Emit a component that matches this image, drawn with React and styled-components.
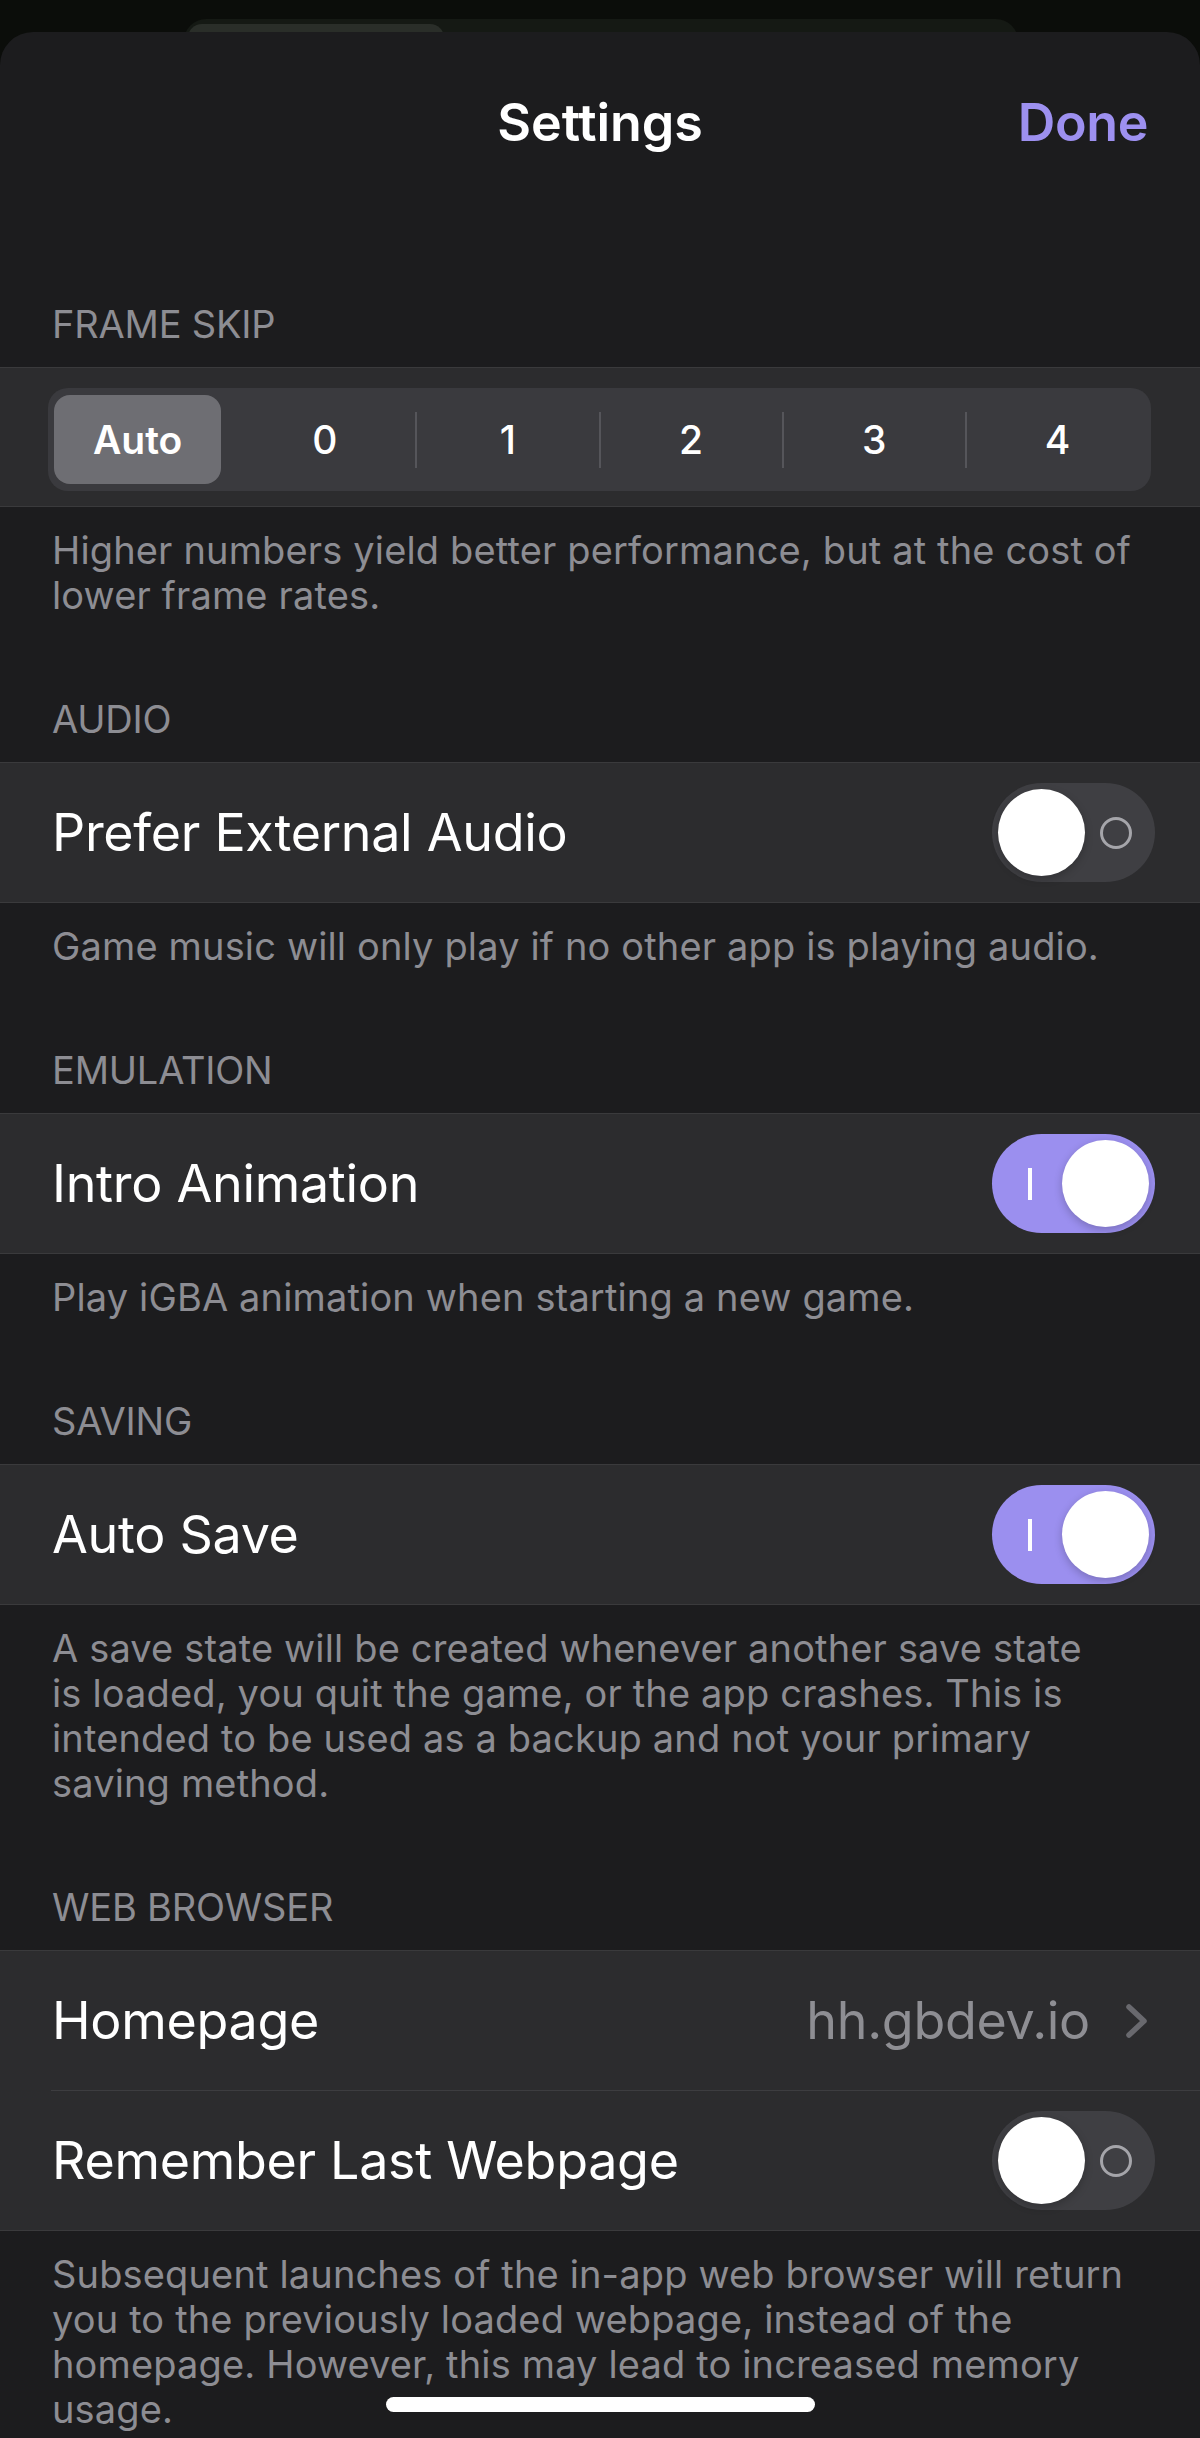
import styled, { createGlobalStyle } from 'styled-components';

const GlobalStyle = createGlobalStyle`
  html, body {
    margin: 0;
    padding: 0;
    background: #0b0d0a;
  }
  body {
    font-family: Inter, "Noto Sans", sans-serif;
    -webkit-font-smoothing: antialiased;
  }
`;

const Backdrop = styled.div`
  height: 32px;
  padding-top: 19px;
  box-sizing: border-box;
  overflow: hidden;
`;

const BehindCard = styled.div`
  margin-left: 184px;
  width: 834px;
  height: 40px;
  padding: 5px 4px;
  box-sizing: border-box;
  background: #151914;
  border-radius: 22px 22px 0 0;
`;

const BehindTab = styled.div`
  width: 256px;
  height: 30px;
  background: #2a2e29;
  border-radius: 14px;
`;

const Sheet = styled.div`
  min-height: calc(100vh - 32px);
  background: #1c1c1e;
  border-radius: 33px 33px 0 0;
  padding-bottom: 10px;
  box-sizing: border-box;
`;

const NavBar = styled.div`
  height: 180px;
  display: grid;
  grid-template-columns: 1fr auto 1fr;
  align-items: center;
  padding: 0 52px;
`;

const NavTitle = styled.div`
  grid-column: 2;
  color: #fff;
  font-size: 52px;
  font-weight: 600;
  letter-spacing: -0.1px;
`;

const DoneButton = styled.div`
  justify-self: end;
  color: #9d90f0;
  font-size: 52px;
  font-weight: 600;
  letter-spacing: -0.4px;
`;

const SectionList = styled.div`
  display: flex;
  flex-direction: column;
  gap: 79px;
  padding-top: 90px;
`;

const Section = styled.section`
  display: flex;
  flex-direction: column;
`;

const SectionHeader = styled.div`
  margin: 0 52px 20px;
  color: #8d8d93;
  font-size: 38px;
  line-height: 45px;
  text-transform: uppercase;
  letter-spacing: -0.2px;
`;

const SectionFooter = styled.div`
  margin: 21px 52px 0;
  color: #8d8d93;
  font-size: 38px;
  line-height: 45px;
  letter-spacing: 0.15px;
`;

const Group = styled.div`
  background: #2c2c2e;
  border-top: 1px solid #3a3a3c;
  border-bottom: 1px solid #3a3a3c;
`;

const Row = styled.div`
  height: 139px;
  display: flex;
  align-items: center;
  justify-content: space-between;
  padding: 0 45px 0 52px;
`;

const RowSeparator = styled.div`
  height: 1px;
  margin-left: 51px;
  background: #3d3d40;
`;

const Label = styled.span`
  color: #fff;
  font-size: 52px;
  letter-spacing: -0.3px;
`;

const Trailing = styled.div`
  display: flex;
  align-items: center;
  gap: 35px;
  margin-right: 7px;
`;

const Detail = styled.span`
  color: #8e8e93;
  font-size: 52px;
  letter-spacing: -0.3px;
`;

const Segmented = styled.div`
  height: 103px;
  margin: 20px 49px 15px 48px;
  padding: 2px;
  box-sizing: border-box;
  display: flex;
  align-items: center;
  background: #3a3a3e;
  border-radius: 20px;
`;

const Segment = styled.div`
  flex: 1;
  height: 100%;
  display: flex;
`;

const SegmentLabel = styled.div`
  flex: 1;
  display: flex;
  align-items: center;
  justify-content: center;
  color: #fff;
  font-size: 39px;
  font-weight: ${p => (p.$selected ? 600 : 500)};
  margin: ${p => (p.$selected ? '5px 12px 5px 4px' : '0')};
  background: ${p => (p.$selected ? '#6e6e73' : 'transparent')};
  border-radius: 16px;
`;

const SegmentDivider = styled.div`
  width: 2px;
  height: 56px;
  margin: 0 -1px;
  background: ${p => (p.$hidden ? 'transparent' : '#55555a')};
`;

const Switch = styled.div`
  width: 163px;
  height: 99px;
  padding: 6px;
  box-sizing: border-box;
  display: flex;
  align-items: center;
  justify-content: space-between;
  flex-direction: ${p => (p.$on ? 'row-reverse' : 'row')};
  background: ${p => (p.$on ? '#9b8fef' : '#3f3f43')};
  border-radius: 50px;
`;

const Thumb = styled.div`
  width: 87px;
  height: 87px;
  border-radius: 50%;
  background: #fff;
  box-shadow: 0 3px 8px rgba(0, 0, 0, 0.22);
`;

const OnMark = styled.div`
  width: 4px;
  height: 32px;
  margin-left: 30px;
  background: #fff;
`;

const OffMark = styled.div`
  width: 32px;
  height: 32px;
  margin-right: 17px;
  box-sizing: border-box;
  border: 3.5px solid #a5a5aa;
  border-radius: 50%;
`;

const HomeIndicator = styled.div`
  position: fixed;
  left: 50%;
  bottom: 26px;
  width: 429px;
  height: 15px;
  margin-left: -214px;
  border-radius: 8px;
  background: #fff;
`;

const frameOptions = ['Auto', '0', '1', '2', '3', '4'];

const Toggle = ({ on }) => (
  <Switch $on={on}>
    <Thumb />
    {on ? <OnMark /> : <OffMark />}
  </Switch>
);

const Chevron = () => (
  <svg width="23" height="36" viewBox="0 0 23 36">
    <polyline
      points="4,4 19,18 4,32"
      fill="none"
      stroke="#69696e"
      strokeWidth="5.5"
      strokeLinecap="round"
      strokeLinejoin="round"
    />
  </svg>
);

const FrameSkipControl = ({ selected }) => (
  <Segmented>
    {frameOptions.map((opt, i) => [
      i > 0 && (
        <SegmentDivider key={`d${i}`} $hidden={i === selected || i - 1 === selected} />
      ),
      <Segment key={opt}>
        <SegmentLabel $selected={i === selected}>{opt}</SegmentLabel>
      </Segment>,
    ])}
  </Segmented>
);

const App = () => {
  return (
    <>
      <GlobalStyle />
      <Backdrop>
        <BehindCard>
          <BehindTab />
        </BehindCard>
      </Backdrop>
      <Sheet>
        <NavBar>
          <NavTitle>Settings</NavTitle>
          <DoneButton>Done</DoneButton>
        </NavBar>

        <SectionList>
          <Section>
            <SectionHeader>Frame Skip</SectionHeader>
            <Group>
              <FrameSkipControl selected={0} />
            </Group>
            <SectionFooter>
              Higher numbers yield better performance, but at the cost of<br />
              lower frame rates.
            </SectionFooter>
          </Section>

          <Section>
            <SectionHeader>Audio</SectionHeader>
            <Group>
              <Row>
                <Label>Prefer External Audio</Label>
                <Toggle on={false} />
              </Row>
            </Group>
            <SectionFooter>
              Game music will only play if no other app is playing audio.
            </SectionFooter>
          </Section>

          <Section>
            <SectionHeader>Emulation</SectionHeader>
            <Group>
              <Row>
                <Label>Intro Animation</Label>
                <Toggle on />
              </Row>
            </Group>
            <SectionFooter>Play iGBA animation when starting a new game.</SectionFooter>
          </Section>

          <Section>
            <SectionHeader>Saving</SectionHeader>
            <Group>
              <Row>
                <Label>Auto Save</Label>
                <Toggle on />
              </Row>
            </Group>
            <SectionFooter>
              A save state will be created whenever another save state<br />
              is loaded, you quit the game, or the app crashes. This is<br />
              intended to be used as a backup and not your primary<br />
              saving method.
            </SectionFooter>
          </Section>

          <Section>
            <SectionHeader>Web Browser</SectionHeader>
            <Group>
              <Row>
                <Label>Homepage</Label>
                <Trailing>
                  <Detail>hh.gbdev.io</Detail>
                  <Chevron />
                </Trailing>
              </Row>
              <RowSeparator />
              <Row>
                <Label>Remember Last Webpage</Label>
                <Toggle on={false} />
              </Row>
            </Group>
            <SectionFooter>
              Subsequent launches of the in-app web browser will return<br />
              you to the previously loaded webpage, instead of the<br />
              homepage. However, this may lead to increased memory<br />
              usage.
            </SectionFooter>
          </Section>
        </SectionList>
      </Sheet>
      <HomeIndicator />
    </>
  );
};

export default App;
